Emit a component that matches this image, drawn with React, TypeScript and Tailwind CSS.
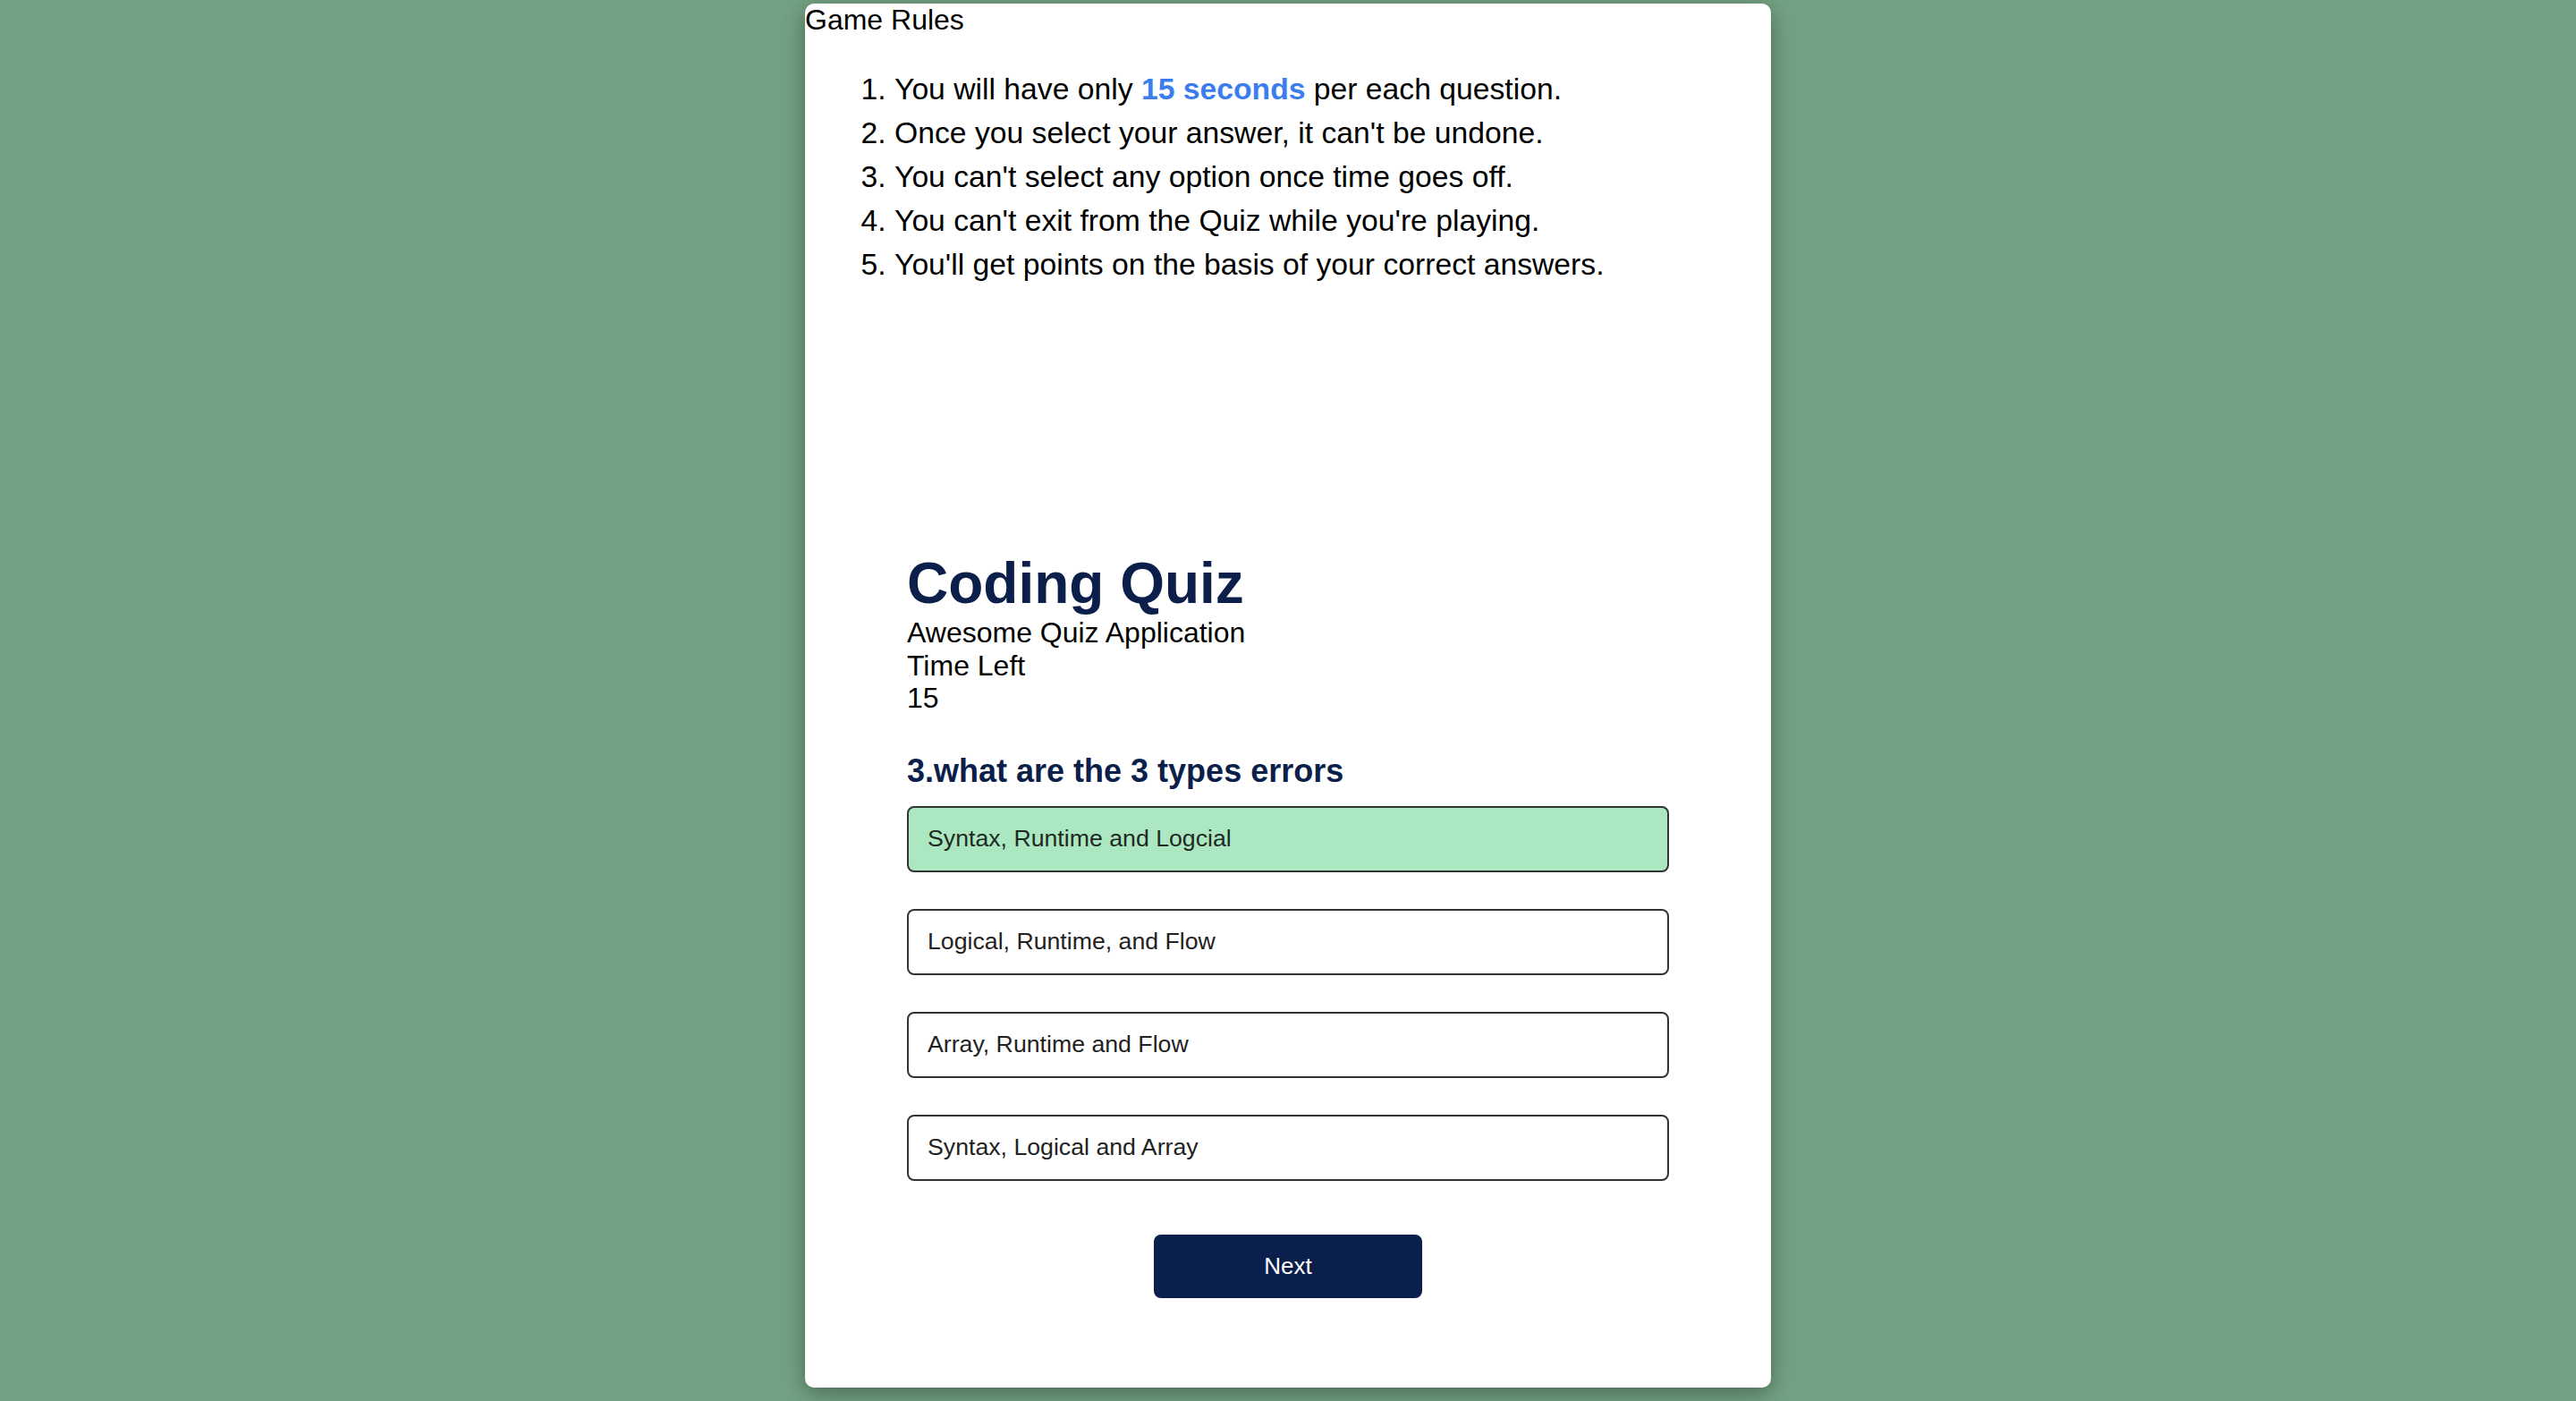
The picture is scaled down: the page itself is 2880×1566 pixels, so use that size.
import React from "react";

const options = [
  "Syntax, Runtime and Logcial",
  "Logical, Runtime, and Flow",
  "Array, Runtime and Flow",
  "Syntax, Logical and Array",
];

export default function App() {
  return (
    <div
      className="min-h-screen bg-[#73a183] flex justify-center pt-[4px]"
      style={{ fontFamily: '"Liberation Sans", Arial, sans-serif' }}
    >
      <div className="w-[1080px] h-[1547px] bg-white rounded-[10px] shadow-[0_6px_24px_rgba(0,0,0,0.35)] flex flex-col">
        <div className="text-[32px] leading-[37px] text-black">Game Rules</div>
        <ol className="list-decimal pl-[100px] mt-[34px] text-[33.7px] leading-[49px] text-black">
          <li>
            You will have only{" "}
            <span className="font-bold text-[#3b7ded]">15 seconds</span> per
            each question.
          </li>
          <li>Once you select your answer, it can't be undone.</li>
          <li>You can't select any option once time goes off.</li>
          <li>You can't exit from the Quiz while you're playing.</li>
          <li>You'll get points on the basis of your correct answers.</li>
        </ol>
        <div className="mt-[295px] px-[114px] flex flex-col">
          <h1 className="text-[64px] font-bold leading-[74px] text-[#0c1f4b]">
            Coding Quiz
          </h1>
          <div className="text-[32px] leading-[36.5px] text-black">
            <p>Awesome Quiz Application</p>
            <p>Time Left</p>
            <p>15</p>
          </div>
          <h2 className="mt-[42px] text-[36px] font-bold leading-[41px] text-[#0c1f4b]">
            3.what are the 3 types errors
          </h2>
          <div className="mt-[19px] flex flex-col gap-[41px]">
            {options.map((o, i) => (
              <div
                key={o}
                className={
                  i === 0
                    ? "h-[74px] border-2 border-[#333333] rounded-[8px] px-[21px] flex items-center text-[26.7px] text-[#1f2a22] bg-[#abe8c2]"
                    : "h-[74px] border-2 border-[#333333] rounded-[8px] px-[21px] flex items-center text-[26.7px] text-[#222222] bg-white"
                }
              >
                {o}
              </div>
            ))}
          </div>
          <div className="flex justify-center mt-[60px]">
            <button className="w-[300px] h-[71px] bg-[#0a1f4b] rounded-[8px] text-white text-[26px]">
              Next
            </button>
          </div>
        </div>
      </div>
    </div>
  );
}
